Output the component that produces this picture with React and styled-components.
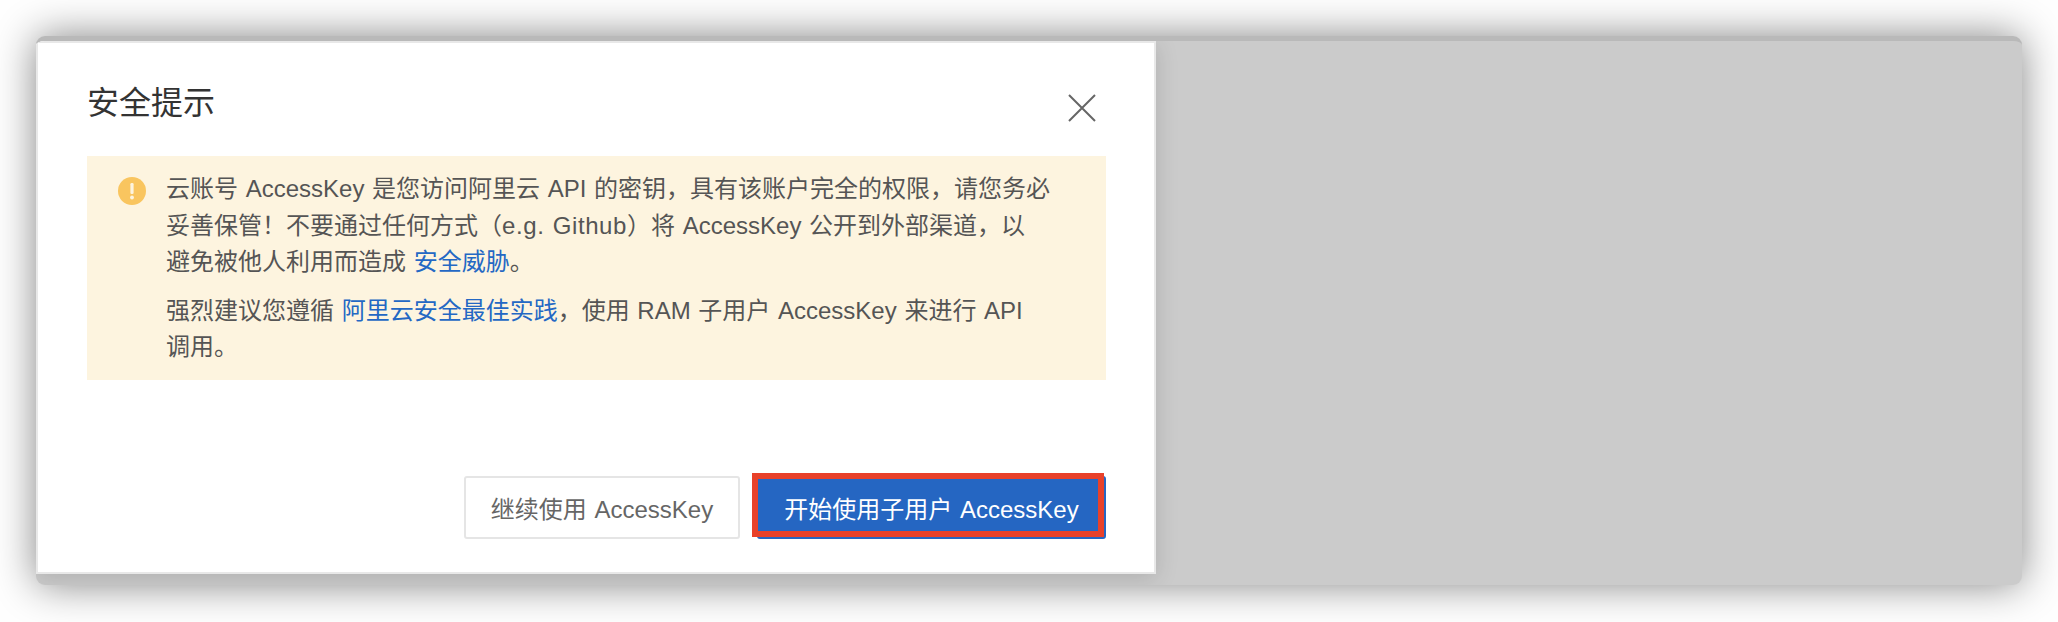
import React from 'react';
import styled, { createGlobalStyle } from 'styled-components';

const GlobalStyle = createGlobalStyle`
  html, body {
    margin: 0;
    padding: 0;
    background: #fefefe;
  }
`;

const Page = styled.div`
  width: 2058px;
  height: 622px;
  padding: 36px;
  box-sizing: border-box;
  overflow: hidden;
  font-family: "Liberation Sans", "Noto Sans CJK SC", sans-serif;
`;

const Window = styled.div`
  width: 1986px;
  height: 549px;
  background: #cbcbcb;
  border-radius: 9px;
  border-top: 5px solid #b9b9b9;
  box-sizing: border-box;
  box-shadow: 0 0 40px rgba(0, 0, 0, 0.48);
  overflow: hidden;
`;

const Dialog = styled.div`
  width: 1120px;
  height: 533px;
  padding: 0 48px 0 49px;
  box-sizing: border-box;
  background: #fff;
  border: 2px solid #e8e8e8;
  box-shadow: 0 4px 22px rgba(0, 0, 0, 0.14);
  display: flex;
  flex-direction: column;
`;

const Header = styled.div`
  height: 113px;
  display: flex;
  align-items: center;
  justify-content: space-between;
  padding-right: 10px;
`;

const Title = styled.h2`
  margin: 0;
  font-size: 32px;
  font-weight: 400;
  color: #333;
`;

const CloseIcon = styled.svg`
  width: 28px;
  height: 28px;
  margin-top: 17px;
  stroke: #666;
  stroke-width: 2;
  fill: none;
`;

const Alert = styled.div`
  height: 224px;
  padding: 15px 40px 0 31px;
  box-sizing: border-box;
  background: #fdf4df;
  display: flex;
  gap: 20px;
`;

const WarnIcon = styled.svg`
  width: 28px;
  height: 28px;
  margin-top: 6px;
  flex: none;
`;

const AlertText = styled.div`
  font-size: 24px;
  line-height: 36.5px;
  color: #555;
  white-space: nowrap;
  word-spacing: 1px;
`;

const Para = styled.p`
  margin: 0 0 12px;
`;

const Link = styled.a`
  color: #2468c4;
`;

const Example = styled.span`
  letter-spacing: 0.6px;
`;

const Footer = styled.div`
  margin-top: auto;
  padding-bottom: 33px;
  display: flex;
  justify-content: flex-end;
  gap: 17px;
`;

const Button = styled.button`
  height: 63px;
  width: ${(p) => (p.$primary ? '349px' : '276px')};
  padding: 0;
  box-sizing: border-box;
  font-family: inherit;
  font-size: 24px;
  word-spacing: 1px;
  border-radius: 3px;
  border: 2px solid ${(p) => (p.$primary ? '#2566c2' : '#e5e5e5')};
  background: ${(p) => (p.$primary ? '#2566c2' : '#fff')};
  color: ${(p) => (p.$primary ? '#fff' : '#666')};
  position: relative;
`;

const Highlight = styled.span`
  position: absolute;
  left: -7px;
  top: -5px;
  right: 0;
  bottom: 0;
  border: 6px solid #e8412a;
  outline: 1px solid rgba(232, 65, 42, 0.4);
  outline-offset: -1px;
`;

export default function App() {
  return (
    <Page>
      <GlobalStyle />
      <Window>
        <Dialog>
          <Header>
            <Title>安全提示</Title>
            <CloseIcon viewBox="0 0 28 28">
              <path d="M1 1 L27 27 M27 1 L1 27" />
            </CloseIcon>
          </Header>
          <Alert>
            <WarnIcon viewBox="0 0 28 28">
              <circle cx="14" cy="14" r="14" fill="#f9c55f" />
              <rect x="12.4" y="6" width="3.2" height="11" rx="1.2" fill="#fdf4df" />
              <circle cx="14" cy="20.5" r="1.9" fill="#fdf4df" />
            </WarnIcon>
            <AlertText>
              <Para>
                云账号 AccessKey 是您访问阿里云 API 的密钥，具有该账户完全的权限，请您务必
                <br />
                妥善保管！不要通过任何方式（<Example>e.g. Github</Example>）将 AccessKey 公开到外部渠道，以
                <br />
                避免被他人利用而造成 <Link>安全威胁</Link>。
              </Para>
              <Para>
                强烈建议您遵循 <Link>阿里云安全最佳实践</Link>，使用 RAM 子用户 AccessKey 来进行 API
                <br />
                调用。
              </Para>
            </AlertText>
          </Alert>
          <Footer>
            <Button>继续使用 AccessKey</Button>
            <Button $primary>
              开始使用子用户 AccessKey
              <Highlight />
            </Button>
          </Footer>
        </Dialog>
      </Window>
    </Page>
  );
}
